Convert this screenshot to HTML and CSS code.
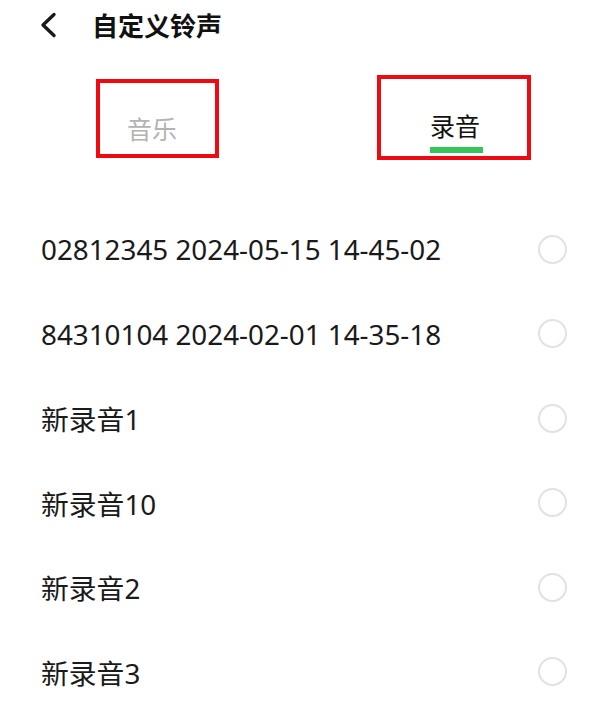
FILE: index.html
```html
<!DOCTYPE html>
<html>
  <head>
    <link rel="stylesheet" href="styles.css">
  </head>
  <body>
    <div class="header">
      <svg class="back" width="18" height="28" viewBox="0 0 18 28">
        <path d="M15 3.5 L4 14 L15 24.5" fill="none" stroke="#1a1a1a" stroke-width="3.4" stroke-linecap="round" stroke-linejoin="round"/>
      </svg>
      <h1 class="title">自定义铃声</h1>
    </div>

    <div class="tabs">
      <div class="tab music">
        <span>音乐</span>
      </div>
      <div class="tab record">
        <span>录音</span>
        <div class="underline"></div>
      </div>
    </div>

    <ul class="list">
      <li class="item"><span>02812345 2024-05-15 14-45-02</span><i class="radio"></i></li>
      <li class="item"><span>84310104 2024-02-01 14-35-18</span><i class="radio"></i></li>
      <li class="item"><span>新录音1</span><i class="radio"></i></li>
      <li class="item"><span>新录音10</span><i class="radio"></i></li>
      <li class="item"><span>新录音2</span><i class="radio"></i></li>
      <li class="item"><span>新录音3</span><i class="radio"></i></li>
    </ul>
  </body>
</html>
```

FILE: styles.css
```css
body {
  margin: 0;
  background: #fff;
  font-family: "Noto Sans", "Noto Sans CJK SC", sans-serif;
  color: #1a1a1a;
  overflow: hidden;
}
.header {
  display: flex;
  align-items: center;
  height: 50px;
  padding-left: 39px;
}
.back {
  display: block;
}
.title {
  margin: 0 0 0 35px;
  font-family: "Noto Sans CJK SC", sans-serif;
  font-size: 26px;
  font-weight: 700;
  color: #111;
  line-height: 1;
}
.tabs {
  display: flex;
  align-items: flex-start;
  padding-left: 96px;
  gap: 158px;
}
.tab {
  display: flex;
  flex-direction: column;
  border: 4px solid #ee0a10;
  box-sizing: border-box;
  font-family: "Noto Sans CJK SC", sans-serif;
  font-size: 25px;
  line-height: 24px;
}
.tab.music {
  width: 123px;
  height: 79px;
  margin-top: 29px;
  justify-content: flex-end;
  padding: 0 0 14px 27px;
  color: #b3b3b3;
}
.tab.record {
  width: 154px;
  height: 85px;
  margin-top: 25px;
  justify-content: flex-end;
  padding: 0 0 3px 49px;
  color: #111;
}
.underline {
  width: 53px;
  height: 6px;
  margin-top: 10px;
  background: #36c55a;
}
.list {
  list-style: none;
  margin: 47px 0 0;
  padding: 0 33px 0 41px;
}
.item {
  display: flex;
  align-items: center;
  justify-content: space-between;
  height: 84.5px;
  font-size: 27.8px;
}
.radio {
  display: block;
  width: 29px;
  height: 29px;
  box-sizing: border-box;
  border: 2.5px solid #e2e2e2;
  border-radius: 50%;
}
```
